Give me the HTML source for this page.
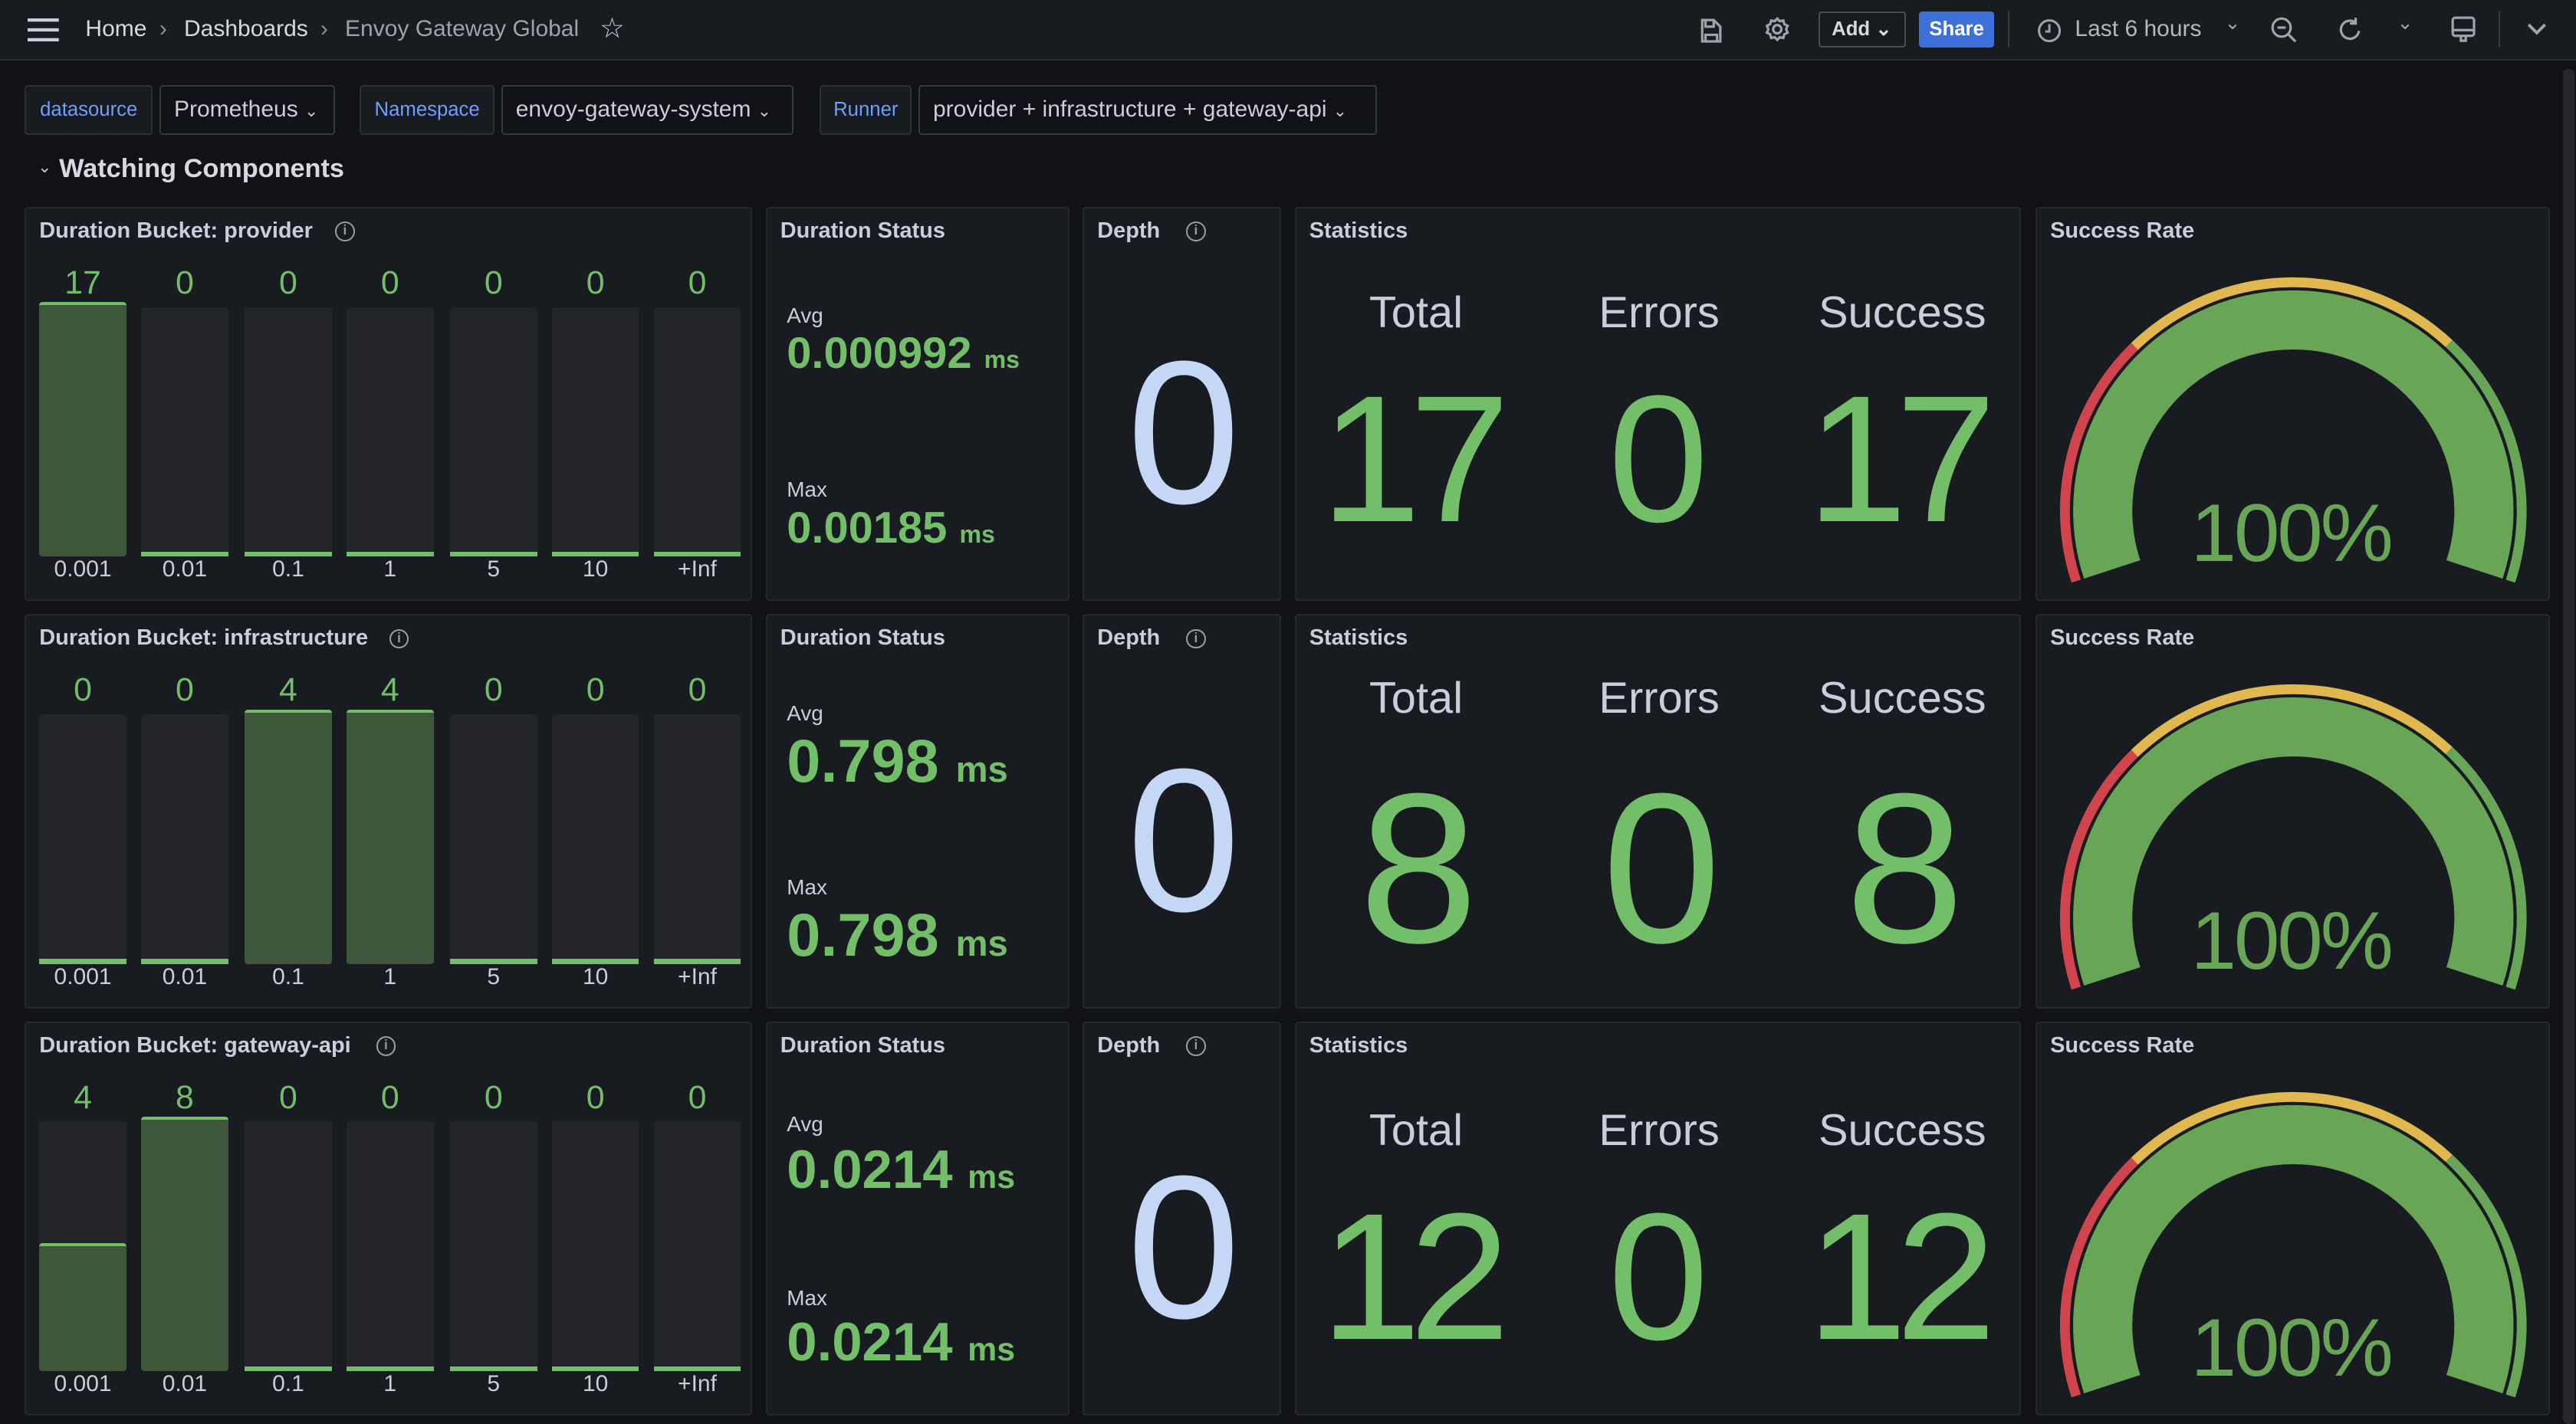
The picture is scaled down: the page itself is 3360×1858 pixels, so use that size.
<!DOCTYPE html>
<html><head><meta charset="utf-8"><style>
html{zoom:2.142857}
*{box-sizing:border-box;margin:0;padding:0}
body{width:1568px;height:867px;background:#111217;font-family:"Liberation Sans",sans-serif;color:#ccccdc;position:relative;overflow:hidden}
.top{position:absolute;left:0;top:0;width:1568px;height:37px;background:#181b1f;border-bottom:1px solid #2c2f35}
.a{position:absolute}
.t{position:absolute;white-space:nowrap;font-size:14px}
.vl{position:absolute;top:52px;height:30px;border:1px solid #2c2f35;border-radius:2px;background:#181b1f;color:#6e9fff;font-size:12px;line-height:28px;text-align:center}
.vv{position:absolute;top:52px;height:30px;border:1px solid #34373d;border-radius:2px;background:#111217;color:#ccccdc;font-size:14px;line-height:28px;padding-left:8px}
.row{position:absolute;left:0;width:1568px;height:240px}
.p{position:absolute;top:0;height:240px;background:#181b1f;border:1px solid #25272c;border-radius:2px}
.pt{position:absolute;left:8px;top:6px;font-size:13.5px;font-weight:bold;color:#ccccdc;white-space:nowrap}
.info{position:absolute;top:8px;width:12px;height:12px;border:1.3px solid #9a9ca4;border-radius:50%;font-size:8px;line-height:9px;text-align:center;color:#9a9ca4;font-weight:bold}
.bg{position:absolute;top:60px;width:53px;height:152px;background:#222429;border-radius:2px}
.fill{position:absolute;width:53px;background:#3c573a;border-top:2px solid #73bf69;border-radius:2px}
.zero{position:absolute;top:209px;width:53px;height:3px;background:#73bf69}
.bv{position:absolute;top:34px;width:53px;text-align:center;font-size:20px;color:#73bf69}
.bx{position:absolute;top:212px;width:53px;text-align:center;font-size:14px;color:#ccccdc}
.sm{position:absolute;left:12px;font-size:13px;color:#ccccdc}
.val{position:absolute;left:12px;white-space:nowrap;color:#73bf69;font-weight:bold}
.depth{position:absolute;left:0;width:121px;text-align:center;top:57px;font-size:124px;line-height:160px;color:#c4d7f7}
.sh{position:absolute;width:150px;text-align:center;font-size:27px;color:#ccccdc}
.sv{position:absolute;width:160px;text-align:center;color:#73bf69;letter-spacing:-7px}
.pct{position:absolute;left:-2px;width:313px;text-align:center;top:171px;font-size:50px;line-height:54px;color:#69a556;letter-spacing:-1.5px}
</style></head><body>
<div class="top">
 <svg class="a" style="left:17px;top:11px" width="19" height="14"><rect y="0" width="19" height="2" fill="#ccccdc"/><rect y="6" width="19" height="2" fill="#ccccdc"/><rect y="12" width="19" height="2" fill="#ccccdc"/></svg>
 <div class="t" style="left:52px;top:10px;color:#d8d9e0">Home</div>
 <div class="t" style="left:97px;top:10px;color:#8e8e95">›</div>
 <div class="t" style="left:112px;top:10px;color:#d8d9e0">Dashboards</div>
 <div class="t" style="left:195px;top:10px;color:#8e8e95">›</div>
 <div class="t" style="left:210px;top:10px;color:#9fa3ab">Envoy Gateway Global</div>
 <div class="t" style="left:365px;top:7px;font-size:17px;color:#ccccdc">☆</div>
 <svg class="a" style="left:1034px;top:11px" width="14" height="15" fill="none" stroke="#9fa3ab" stroke-width="1.5"><path d="M2 1h7l4 4v9H2z M4 1v4h5V1 M4 14v-4h7v4"/></svg>
 <svg class="a" style="left:1074px;top:10px" width="16" height="16" fill="none" stroke="#9fa3ab" stroke-width="1.5"><circle cx="8" cy="8" r="2.5"/><path d="M8 1.5l1.5 1.6 2.2-.4.6 2.2 2 1-.9 2.1.9 2.1-2 1-.6 2.2-2.2-.4L8 14.5l-1.5-1.6-2.2.4-.6-2.2-2-1 .9-2.1-.9-2.1 2-1 .6-2.2 2.2.4z"/></svg>
 <div class="a" style="left:1107px;top:7px;width:53px;height:22px;border:1px solid #4a4d53;border-radius:2px;font-size:12px;line-height:20px;padding-left:7px;color:#d8d9e0;font-weight:bold">Add ⌄</div>
 <div class="a" style="left:1168px;top:7px;width:46px;height:22px;background:#3d71d9;border-radius:2px;font-size:12px;line-height:22px;text-align:center;color:#fff;font-weight:bold">Share</div>
 <div class="a" style="left:1222px;top:7px;width:1px;height:22px;background:#34373d"></div>
 <svg class="a" style="left:1240px;top:11px" width="15" height="15" fill="none" stroke="#9fa3ab" stroke-width="1.4"><circle cx="7.5" cy="7.5" r="6.3"/><path d="M7.5 3.5v4.5H5"/></svg>
 <div class="t" style="left:1263px;top:10px;color:#b4b7be">Last 6 hours</div>
 <div class="t" style="left:1354px;top:7px;color:#9fa3ab;font-size:12px">⌄</div>
 <svg class="a" style="left:1382px;top:10px" width="17" height="17" fill="none" stroke="#9fa3ab" stroke-width="1.5"><circle cx="7" cy="7" r="5.5"/><path d="M4.5 7h5 M11 11l4.5 4.5"/></svg>
 <svg class="a" style="left:1423px;top:10px" width="16" height="17" fill="none" stroke="#9fa3ab" stroke-width="1.5"><path d="M13 9a5.5 5.5 0 1 1-2-5 M11 1v3.5H7.5"/></svg>
 <div class="t" style="left:1459px;top:7px;color:#9fa3ab;font-size:12px">⌄</div>
 <svg class="a" style="left:1492px;top:10px" width="15" height="17" fill="none" stroke="#9fa3ab" stroke-width="1.5"><rect x="1" y="1" width="13" height="11" rx="1.5"/><path d="M1 8.5h13 M6 12v3h3v-3"/></svg>
 <div class="a" style="left:1521px;top:7px;width:1px;height:22px;background:#34373d"></div>
 <svg class="a" style="left:1538px;top:14px" width="12" height="8" fill="none" stroke="#9fa3ab" stroke-width="1.8"><path d="M1 1l5 5 5-5"/></svg>
</div>
<div class="a" style="left:1560px;top:42px;width:7px;height:825px;background:#25272c;border-radius:3px"></div>

<div class="vl" style="left:15px;width:78px">datasource</div>
<div class="vv" style="left:97px;width:107px">Prometheus <span style="font-size:10px">⌄</span></div>
<div class="vl" style="left:219px;width:82px">Namespace</div>
<div class="vv" style="left:305px;width:178px">envoy-gateway-system <span style="font-size:10px">⌄</span></div>
<div class="vl" style="left:499px;width:56px">Runner</div>
<div class="vv" style="left:559px;width:279px">provider + infrastructure + gateway-api <span style="font-size:10px">⌄</span></div>
<div class="t" style="left:23px;top:96px;font-size:10px">⌄</div>
<div class="t" style="left:36px;top:94px;font-size:16px;font-weight:bold;color:#d8d9e0">Watching Components</div>

<!-- ROW 1 -->
<div class="row" style="top:126px">
 <div class="p" style="left:15px;width:443px">
  <div class="pt">Duration Bucket: provider</div><div class="info" style="left:188px">i</div>
  <div class="bg" style="left:8px"></div><div class="fill" style="left:8px;top:57px;height:155px"></div>
  <div class="bg" style="left:70px"></div><div class="zero" style="left:70px"></div>
  <div class="bg" style="left:133px"></div><div class="zero" style="left:133px"></div>
  <div class="bg" style="left:195px"></div><div class="zero" style="left:195px"></div>
  <div class="bg" style="left:258px"></div><div class="zero" style="left:258px"></div>
  <div class="bg" style="left:320px"></div><div class="zero" style="left:320px"></div>
  <div class="bg" style="left:382px"></div><div class="zero" style="left:382px"></div>
  <div class="bv" style="left:8px">17</div><div class="bv" style="left:70px">0</div><div class="bv" style="left:133px">0</div><div class="bv" style="left:195px">0</div><div class="bv" style="left:258px">0</div><div class="bv" style="left:320px">0</div><div class="bv" style="left:382px">0</div>
  <div class="bx" style="left:8px">0.001</div><div class="bx" style="left:70px">0.01</div><div class="bx" style="left:133px">0.1</div><div class="bx" style="left:195px">1</div><div class="bx" style="left:258px">5</div><div class="bx" style="left:320px">10</div><div class="bx" style="left:382px">+Inf</div>
 </div>
 <div class="p" style="left:466px;width:185px">
  <div class="pt">Duration Status</div>
  <div class="sm" style="top:58px">Avg</div>
  <div class="val" style="top:73px;font-size:27px">0.000992 <span style="font-size:15px">ms</span></div>
  <div class="sm" style="top:164px">Max</div>
  <div class="val" style="top:179px;font-size:27px">0.00185 <span style="font-size:15px">ms</span></div>
 </div>
 <div class="p" style="left:659px;width:121px">
  <div class="pt">Depth</div><div class="info" style="left:62px">i</div>
  <div class="depth">0</div>
 </div>
 <div class="p" style="left:788px;width:442px">
  <div class="pt">Statistics</div>
  <div class="sh" style="left:-2px;top:48px">Total</div><div class="sh" style="left:146px;top:48px">Errors</div><div class="sh" style="left:294px;top:48px">Success</div>
  <div class="sv" style="left:-11px;top:90px;font-size:110px;line-height:125px">17</div>
  <div class="sv" style="left:137px;top:90px;font-size:110px;line-height:125px">0</div>
  <div class="sv" style="left:285px;top:90px;font-size:110px;line-height:125px">17</div>
 </div>
 <div class="p" style="left:1239px;width:313px">
  <div class="pt">Success Rate</div>
  <svg class="a" style="left:0;top:0" width="313" height="240" fill="none">
   <path d="M23.8 226.95 A139 139 0 0 1 59.4 84" stroke="#d0444e" stroke-width="6"/>
   <path d="M59.4 84 A139 139 0 0 1 250.8 82.3" stroke="#e0b84f" stroke-width="6"/>
   <path d="M250.8 82.3 A139 139 0 0 1 288.2 226.95" stroke="#69a556" stroke-width="6"/>
   <path d="M45.7 219.8 A116 116 0 1 1 266.3 219.8" stroke="#69a556" stroke-width="36"/>
  </svg>
  <div class="pct">100%</div>
 </div>
</div>

<!-- ROW 2 -->
<div class="row" style="top:374px">
 <div class="p" style="left:15px;width:443px">
  <div class="pt">Duration Bucket: infrastructure</div><div class="info" style="left:221px">i</div>
  <div class="bg" style="left:8px"></div><div class="zero" style="left:8px"></div>
  <div class="bg" style="left:70px"></div><div class="zero" style="left:70px"></div>
  <div class="bg" style="left:133px"></div><div class="fill" style="left:133px;top:57px;height:155px"></div>
  <div class="bg" style="left:195px"></div><div class="fill" style="left:195px;top:57px;height:155px"></div>
  <div class="bg" style="left:258px"></div><div class="zero" style="left:258px"></div>
  <div class="bg" style="left:320px"></div><div class="zero" style="left:320px"></div>
  <div class="bg" style="left:382px"></div><div class="zero" style="left:382px"></div>
  <div class="bv" style="left:8px">0</div><div class="bv" style="left:70px">0</div><div class="bv" style="left:133px">4</div><div class="bv" style="left:195px">4</div><div class="bv" style="left:258px">0</div><div class="bv" style="left:320px">0</div><div class="bv" style="left:382px">0</div>
  <div class="bx" style="left:8px">0.001</div><div class="bx" style="left:70px">0.01</div><div class="bx" style="left:133px">0.1</div><div class="bx" style="left:195px">1</div><div class="bx" style="left:258px">5</div><div class="bx" style="left:320px">10</div><div class="bx" style="left:382px">+Inf</div>
 </div>
 <div class="p" style="left:466px;width:185px">
  <div class="pt">Duration Status</div>
  <div class="sm" style="top:52px">Avg</div>
  <div class="val" style="top:67px;font-size:37px">0.798 <span style="font-size:22px">ms</span></div>
  <div class="sm" style="top:158px">Max</div>
  <div class="val" style="top:173px;font-size:37px">0.798 <span style="font-size:22px">ms</span></div>
 </div>
 <div class="p" style="left:659px;width:121px">
  <div class="pt">Depth</div><div class="info" style="left:62px">i</div>
  <div class="depth">0</div>
 </div>
 <div class="p" style="left:788px;width:442px">
  <div class="pt">Statistics</div>
  <div class="sh" style="left:-2px;top:35px">Total</div><div class="sh" style="left:146px;top:35px">Errors</div><div class="sh" style="left:294px;top:35px">Success</div>
  <div class="sv" style="left:-9px;top:82px;font-size:130px;line-height:145px">8</div>
  <div class="sv" style="left:139px;top:82px;font-size:130px;line-height:145px">0</div>
  <div class="sv" style="left:287px;top:82px;font-size:130px;line-height:145px">8</div>
 </div>
 <div class="p" style="left:1239px;width:313px">
  <div class="pt">Success Rate</div>
  <svg class="a" style="left:0;top:0" width="313" height="240" fill="none">
   <path d="M23.8 226.95 A139 139 0 0 1 59.4 84" stroke="#d0444e" stroke-width="6"/>
   <path d="M59.4 84 A139 139 0 0 1 250.8 82.3" stroke="#e0b84f" stroke-width="6"/>
   <path d="M250.8 82.3 A139 139 0 0 1 288.2 226.95" stroke="#69a556" stroke-width="6"/>
   <path d="M45.7 219.8 A116 116 0 1 1 266.3 219.8" stroke="#69a556" stroke-width="36"/>
  </svg>
  <div class="pct">100%</div>
 </div>
</div>

<!-- ROW 3 -->
<div class="row" style="top:622px">
 <div class="p" style="left:15px;width:443px">
  <div class="pt">Duration Bucket: gateway-api</div><div class="info" style="left:213px">i</div>
  <div class="bg" style="left:8px"></div><div class="fill" style="left:8px;top:134px;height:78px"></div>
  <div class="bg" style="left:70px"></div><div class="fill" style="left:70px;top:57px;height:155px"></div>
  <div class="bg" style="left:133px"></div><div class="zero" style="left:133px"></div>
  <div class="bg" style="left:195px"></div><div class="zero" style="left:195px"></div>
  <div class="bg" style="left:258px"></div><div class="zero" style="left:258px"></div>
  <div class="bg" style="left:320px"></div><div class="zero" style="left:320px"></div>
  <div class="bg" style="left:382px"></div><div class="zero" style="left:382px"></div>
  <div class="bv" style="left:8px">4</div><div class="bv" style="left:70px">8</div><div class="bv" style="left:133px">0</div><div class="bv" style="left:195px">0</div><div class="bv" style="left:258px">0</div><div class="bv" style="left:320px">0</div><div class="bv" style="left:382px">0</div>
  <div class="bx" style="left:8px">0.001</div><div class="bx" style="left:70px">0.01</div><div class="bx" style="left:133px">0.1</div><div class="bx" style="left:195px">1</div><div class="bx" style="left:258px">5</div><div class="bx" style="left:320px">10</div><div class="bx" style="left:382px">+Inf</div>
 </div>
 <div class="p" style="left:466px;width:185px">
  <div class="pt">Duration Status</div>
  <div class="sm" style="top:54px">Avg</div>
  <div class="val" style="top:70px;font-size:33px">0.0214 <span style="font-size:20px">ms</span></div>
  <div class="sm" style="top:160px">Max</div>
  <div class="val" style="top:175px;font-size:33px">0.0214 <span style="font-size:20px">ms</span></div>
 </div>
 <div class="p" style="left:659px;width:121px">
  <div class="pt">Depth</div><div class="info" style="left:62px">i</div>
  <div class="depth">0</div>
 </div>
 <div class="p" style="left:788px;width:442px">
  <div class="pt">Statistics</div>
  <div class="sh" style="left:-2px;top:50px">Total</div><div class="sh" style="left:146px;top:50px">Errors</div><div class="sh" style="left:294px;top:50px">Success</div>
  <div class="sv" style="left:-11px;top:92px;font-size:110px;line-height:125px">12</div>
  <div class="sv" style="left:137px;top:92px;font-size:110px;line-height:125px">0</div>
  <div class="sv" style="left:285px;top:92px;font-size:110px;line-height:125px">12</div>
 </div>
 <div class="p" style="left:1239px;width:313px">
  <div class="pt">Success Rate</div>
  <svg class="a" style="left:0;top:0" width="313" height="240" fill="none">
   <path d="M23.8 226.95 A139 139 0 0 1 59.4 84" stroke="#d0444e" stroke-width="6"/>
   <path d="M59.4 84 A139 139 0 0 1 250.8 82.3" stroke="#e0b84f" stroke-width="6"/>
   <path d="M250.8 82.3 A139 139 0 0 1 288.2 226.95" stroke="#69a556" stroke-width="6"/>
   <path d="M45.7 219.8 A116 116 0 1 1 266.3 219.8" stroke="#69a556" stroke-width="36"/>
  </svg>
  <div class="pct">100%</div>
 </div>
</div>
</body></html>
